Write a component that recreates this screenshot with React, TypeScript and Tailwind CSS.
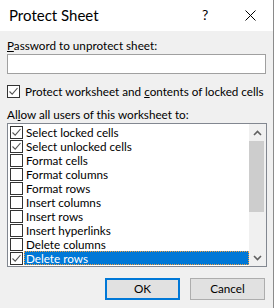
import React from "react";

const items: [string, boolean][] = [
  ["Select locked cells", true],
  ["Select unlocked cells", true],
  ["Format cells", false],
  ["Format columns", false],
  ["Format rows", false],
  ["Insert columns", false],
  ["Insert rows", false],
  ["Insert hyperlinks", false],
  ["Delete columns", false],
  ["Delete rows", true],
];

function Box({ checked }: { checked: boolean }) {
  return (
    <div className="w-[13px] h-[13px] border border-[#333333] bg-white flex items-center justify-center shrink-0">
      {checked && (
        <svg width="11" height="11" viewBox="0 0 11 11">
          <path d="M1.5 5.5 L4.2 8.2 L9.5 2" fill="none" stroke="#555555" strokeWidth="1.1" />
        </svg>
      )}
    </div>
  );
}

export default function App() {
  return (
    <div
      className="w-[274px] h-[308px] bg-[#f0f0f0] border-r border-[#8a8a8a] flex flex-col text-[11.7px] text-black"
      style={{ fontFamily: 'Lato, "Noto Sans", sans-serif' }}
    >
      <div className="h-[31px] bg-white flex items-center shrink-0 relative">
        <span className="ml-[9px] text-[15px] leading-none">Protect Sheet</span>
        <span className="absolute left-[202px] top-[8px] text-[14px] leading-none">?</span>
        <svg className="absolute left-[245px] top-[10px]" width="11" height="11" viewBox="0 0 11 11">
          <path d="M0.5 0.5 L10.5 10.5 M10.5 0.5 L0.5 10.5" stroke="#000" strokeWidth="1" />
        </svg>
      </div>
      <div className="px-[7px] flex flex-col">
        <div className="mt-[6px] h-[16px] leading-[16px]">
          <span className="underline">P</span>assword to unprotect sheet:
        </div>
        <div className="mt-[1px] h-[20px] bg-white border border-[#a0a0a0]" />
        <div className="mt-[9px] h-[16px] flex items-center">
          <Box checked={true} />
          <span className="ml-[5px] leading-[16px] whitespace-nowrap">
            Protect worksheet and <span className="underline">c</span>ontents of locked cells
          </span>
        </div>
        <div className="mt-[7px] h-[16px] leading-[16px]">
          Al<span className="underline">l</span>ow all users of this worksheet to:
        </div>
        <div className="mt-[1px] h-[144px] border border-[#828790] bg-white flex w-[260px]">
          <div className="flex-1 flex flex-col pt-[1px]">
            {items.map(([label, checked], i) => {
              const sel = i === items.length - 1;
              return (
                <div key={label} className="h-[14px] flex items-center">
                  <div className="w-[16px] pl-[2px] flex items-center">
                    <Box checked={checked} />
                  </div>
                  <div
                    className={
                      "flex-1 h-[14px] leading-[12px] whitespace-nowrap overflow-hidden " +
                      (sel
                        ? "bg-[#0078d7] text-white border border-dotted border-[#f0a040] pl-[1px]"
                        : "pl-[2px] pt-[1px]")
                    }
                  >
                    {label}
                  </div>
                </div>
              );
            })}
          </div>
          <div className="w-[17px] bg-[#f0f0f0] flex flex-col">
            <div className="h-[17px] flex items-center justify-center">
              <svg width="9" height="6" viewBox="0 0 9 6">
                <path d="M1 5 L4.5 1.5 L8 5" fill="none" stroke="#606060" strokeWidth="1.6" />
              </svg>
            </div>
            <div className="h-[71px] mr-[2px] bg-[#cdcdcd]" />
            <div className="flex-1" />
            <div className="h-[17px] flex items-center justify-center">
              <svg width="9" height="6" viewBox="0 0 9 6">
                <path d="M1 1 L4.5 4.5 L8 1" fill="none" stroke="#606060" strokeWidth="1.6" />
              </svg>
            </div>
          </div>
        </div>
        <div className="mt-[11px] flex justify-end gap-[10px] pr-[1px]">
          <button className="w-[75px] h-[22px] bg-[#e1e1e1] border-2 border-[#0078d7] flex items-center justify-center leading-none">
            OK
          </button>
          <button className="w-[75px] h-[22px] bg-[#e1e1e1] border border-[#adadad] flex items-center justify-center leading-none">
            Cancel
          </button>
        </div>
      </div>
    </div>
  );
}
